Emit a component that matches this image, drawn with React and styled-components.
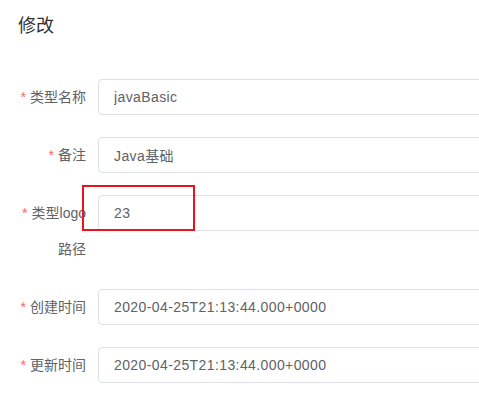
import React from "react";
import styled, { createGlobalStyle } from "styled-components";

const GlobalStyle = createGlobalStyle`
  html, body {
    margin: 0;
    padding: 0;
    background: #fff;
    overflow: hidden;
  }
  body {
    font-family: "Liberation Sans", "Noto Sans CJK SC", sans-serif;
  }
`;

const DialogStyled = styled.div`
  width: 640px;
  padding: 14px 0 0 18px;
  box-sizing: border-box;
`;

const TitleStyled = styled.div`
  font-size: 18px;
  line-height: 24px;
  color: #303133;
`;

const FormStyled = styled.form`
  margin-top: 41px;
  display: flex;
  flex-direction: column;
  gap: 22px;
`;

const ItemStyled = styled.div`
  display: flex;
  align-items: flex-start;
`;

const LabelStyled = styled.label`
  width: 80px;
  flex-shrink: 0;
  box-sizing: border-box;
  padding-right: 12px;
  text-align: right;
  font-size: 14px;
  line-height: 36px;
  color: #606266;

  &::before {
    content: "*";
    color: #f56c6c;
    margin-right: 4px;
  }
`;

const FieldStyled = styled.div`
  position: relative;
  flex: 1;
`;

const InputStyled = styled.input`
  display: block;
  width: 100%;
  height: 36px;
  box-sizing: border-box;
  padding: 0 15px;
  border: 1px solid #dcdfe6;
  border-radius: 4px;
  background: #fff;
  font-family: inherit;
  font-size: 14px;
  letter-spacing: 0.4px;
  color: #606266;
  outline: none;
`;

const MarkStyled = styled.div`
  position: absolute;
  left: -16px;
  top: -10px;
  width: 113px;
  height: 46px;
  box-sizing: border-box;
  border: 2px solid #e8141e;
  pointer-events: none;
`;

const fields = [
  { label: "类型名称", value: "javaBasic" },
  { label: "备注", value: "Java基础" },
  { label: "类型logo路径", value: "23", marked: true },
  { label: "创建时间", value: "2020-04-25T21:13:44.000+0000" },
  { label: "更新时间", value: "2020-04-25T21:13:44.000+0000" },
];

const App = () => {
  return (
    <>
      <GlobalStyle />
      <DialogStyled>
        <TitleStyled>修改</TitleStyled>
        <FormStyled>
          {fields.map((f, i) => (
            <ItemStyled key={i}>
              <LabelStyled>{f.label}</LabelStyled>
              <FieldStyled>
                <InputStyled defaultValue={f.value} readOnly />
                {f.marked && <MarkStyled />}
              </FieldStyled>
            </ItemStyled>
          ))}
        </FormStyled>
      </DialogStyled>
    </>
  );
};

export default App;
